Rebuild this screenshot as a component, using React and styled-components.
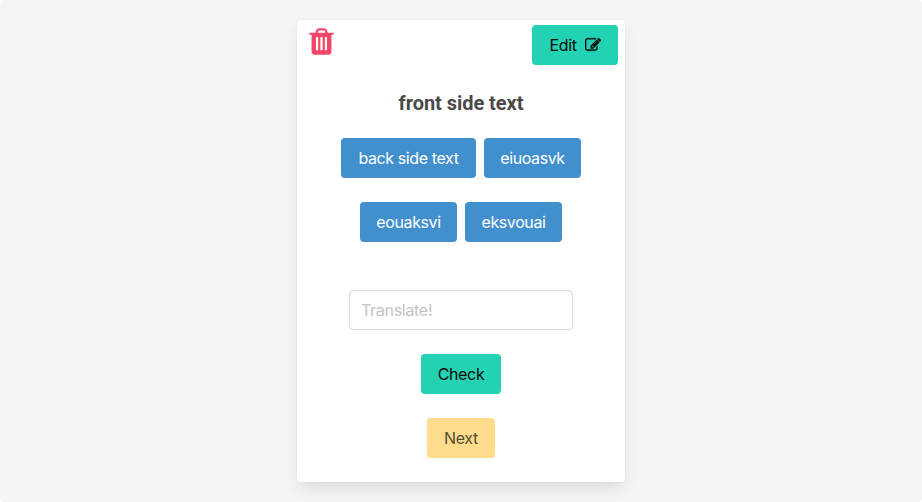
import React from "react";
import styled, { createGlobalStyle } from "styled-components";

const GlobalStyle = createGlobalStyle`
  *, *::before, *::after { box-sizing: border-box; }
  body { margin: 0; background: #fff; font-family: Inter, "Liberation Sans", sans-serif; color: #4a4a4a; }
`;
const Page = styled.main`
  height: 502px;
  padding-top: 20px;
  display: flex;
  justify-content: center;
  align-items: flex-start;
  background: #f5f5f5;
  border-radius: 4px;
  overflow: hidden;
`;
const Card = styled.section`
  width: 328px;
  height: 462px;
  background: #fff;
  border-radius: 4px;
  box-shadow: 0 8px 16px -2px rgba(10, 10, 10, 0.1), 0 0 0 1px rgba(10, 10, 10, 0.02);
  display: flex;
  flex-direction: column;
  align-items: center;
`;
const CardHeader = styled.header`
  width: 100%;
  height: 45px;
  padding: 5px 7px 0 9px;
  display: flex;
  justify-content: space-between;
  align-items: flex-start;
`;
const DeleteButton = styled.button`
  margin-top: 1px;
  padding: 0;
  border: 0;
  background: none;
  color: #f14668;
  line-height: 0;
`;
const Icon = styled.svg`
  width: ${(p) => p.$size}px;
  height: ${(p) => p.$size}px;
  fill: currentColor;
  stroke: currentColor;
  stroke-width: ${(p) => p.$stroke || 0};
  flex: none;
`;
const tones = {
  primary: ["#23d1b3", "#0a0a0a"],
  word: ["#428fce", "#fff"],
  next: ["#ffdd8c", "#554c36"],
};
const Button = styled.button`
  width: ${(p) => p.$width}px;
  height: 40px;
  padding: 0;
  display: flex;
  align-items: center;
  justify-content: center;
  gap: 8px;
  border: 0;
  border-radius: 4px;
  background: ${(p) => tones[p.$tone][0]};
  color: ${(p) => tones[p.$tone][1]};
  font: 400 16px/24px Inter, "Liberation Sans", sans-serif;
  letter-spacing: ${(p) => (p.$tone === "word" ? -0.4 : -0.33)}px;
  white-space: nowrap;
`;
const Title = styled.h1`
  margin: 23px 0 20px;
  font: 700 20px/30px Roboto, sans-serif;
  letter-spacing: -0.05px;
  color: #4a4a4a;
`;
const WordRow = styled.div`
  display: flex;
  gap: 8px;
  margin-bottom: 24px;
`;
const Answer = styled.input`
  width: 224px;
  height: 40px;
  margin: 24px 0;
  padding: 0 11px;
  border: 1px solid #dbdbdb;
  border-radius: 4px;
  background: #fff;
  box-shadow: inset 0 1px 2px rgba(10, 10, 10, 0.05);
  font: 400 16px/24px Inter, "Liberation Sans", sans-serif;
  letter-spacing: -0.3px;
  color: #363636;
  &::placeholder { color: #c3c3c3; opacity: 1; }
`;
const Actions = styled.div`
  display: flex;
  flex-direction: column;
  align-items: center;
  gap: 24px;
`;

const TrashIcon = () => (
  <Icon $size={31} viewBox="0 0 1792 1792">
    <path d="M704 1376v-704q0-14-9-23t-23-9h-64q-14 0-23 9t-9 23v704q0 14 9 23t23 9h64q14 0 23-9t9-23zm256 0v-704q0-14-9-23t-23-9h-64q-14 0-23 9t-9 23v704q0 14 9 23t23 9h64q14 0 23-9t9-23zm256 0v-704q0-14-9-23t-23-9h-64q-14 0-23 9t-9 23v704q0 14 9 23t23 9h64q14 0 23-9t9-23zm-544-992h448l-48-117q-7-9-17-11h-317q-10 2-17 11zm928 32v64q0 14-9 23t-23 9h-96v948q0 83-47 143.5t-113 60.5h-832q-66 0-113-58.5t-47-141.5v-952h-96q-14 0-23-9t-9-23v-64q0-14 9-23t23-9h309l70-167q15-37 54-63t79-26h320q40 0 79 26t54 63l70 167h309q14 0 23 9t9 23z" />
  </Icon>
);
const EditIcon = () => (
  <Icon $size={16} $stroke={40} viewBox="0 0 1792 1792">
    <path d="M888 1184l116-116-152-152-116 116v56h96v96h56zm440-720q-16-16-33 1l-350 350q-17 17-1 33t33-1l350-350q17-17 1-33zm80 594v190q0 119-84.5 203.5t-203.5 84.5h-832q-119 0-203.5-84.5t-84.5-203.5v-832q0-119 84.5-203.5t203.5-84.5h832q63 0 117 25 15 7 18 23 3 17-9 29l-49 49q-14 14-32 8-23-6-45-6h-832q-66 0-113 47t-47 113v832q0 66 47 113t113 47h832q66 0 113-47t47-113v-126q0-13 9-22l64-64q15-15 35-7t20 29zm-96-738l288 288-672 672h-288v-288zm444 132l-92 92-288-288 92-92q28-28 68-28t68 28l152 152q28 28 28 68t-28 68z" />
  </Icon>
);

export default function App() {
  return (
    <>
      <GlobalStyle />
      <Page>
        <Card>
          <CardHeader>
            <DeleteButton aria-label="Delete"><TrashIcon /></DeleteButton>
            <Button $tone="primary" $width={86}>Edit<EditIcon /></Button>
          </CardHeader>
          <Title>front side text</Title>
          <WordRow>
            <Button $tone="word" $width={135}>back side text</Button>
            <Button $tone="word" $width={97}>eiuoasvk</Button>
          </WordRow>
          <WordRow>
            <Button $tone="word" $width={97}>eouaksvi</Button>
            <Button $tone="word" $width={97}>eksvouai</Button>
          </WordRow>
          <Answer placeholder="Translate!" />
          <Actions>
            <Button $tone="primary" $width={80}>Check</Button>
            <Button $tone="next" $width={68}>Next</Button>
          </Actions>
        </Card>
      </Page>
    </>
  );
}
